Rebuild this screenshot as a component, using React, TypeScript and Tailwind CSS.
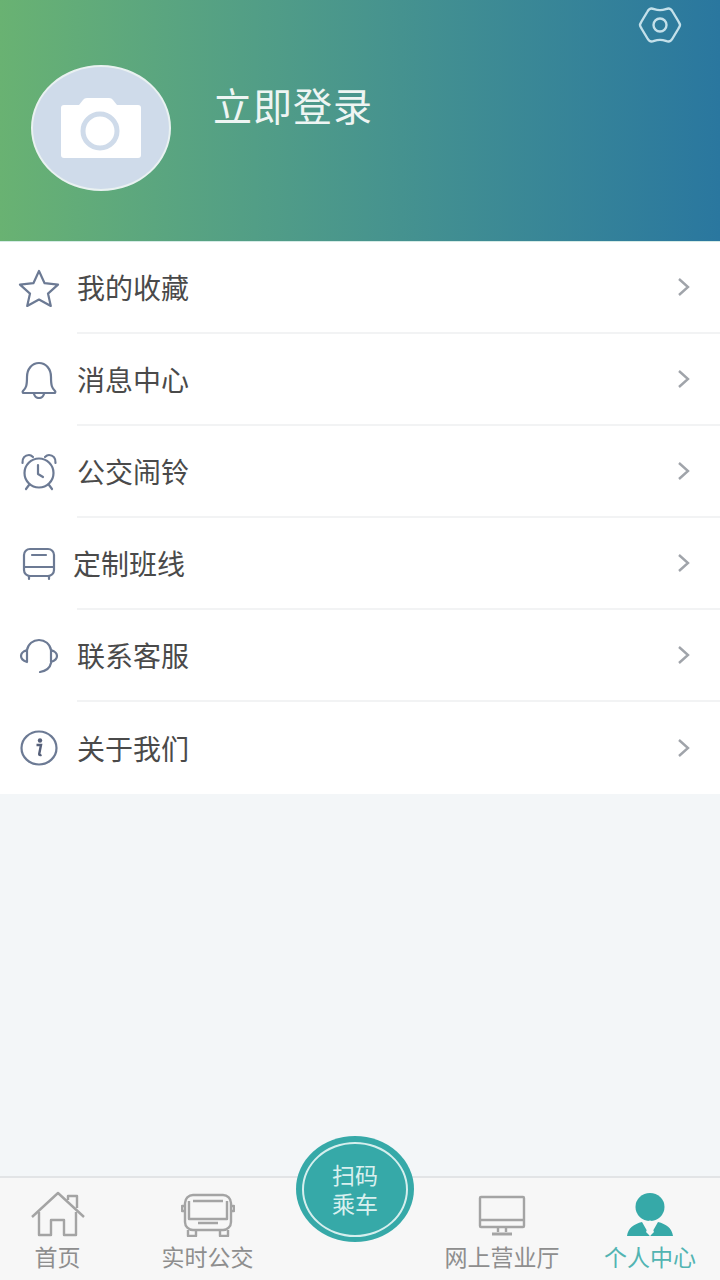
import React from "react";

const cjk = "font-['Noto_Sans_CJK_SC','Noto_Sans_CJK_JP',sans-serif]";

function Gear() {
  return (
    <svg width="44" height="40" viewBox="0 0 44 40" fill="none" stroke="#c4e0ea" strokeWidth="2.4" strokeLinejoin="round">
      <path d="M13.5 3.5c2.5 0 3.5 1.6 8.5 1.6s6-1.6 8.5-1.6c2 0 3 1.2 4 3l6 10c1 1.7 1.5 2.4 1.5 3.5s-.5 1.8-1.5 3.500l-6 10c-1 1.800-2 3-4 3-2.500 0-3.500-1.600-8.500-1.600s-6 1.600-8.500 1.600c-2 0-3-1.200-4-3l-6-10C2.500 21.800 2 21.100 2 20s.5-1.800 1.500-3.500l6-10c1-1.800 2-3 4-3z" />
      <ellipse cx="22" cy="20" rx="6.5" ry="6.500" />
    </svg>
  );
}

function Camera() {
  return (
    <svg width="80" height="60" viewBox="0 0 80 60">
      <path d="M3 7h15l4-5c1-1.300 2-2 4-2h22c2 0 3 .7 4 2l4 5h21c2 0 3 1 3 3v47c0 2-1 3-3 3H3c-2 0-3-1-3-3V10c0-2 1-3 3-3z" fill="#fff" />
      <ellipse cx="39" cy="33" rx="17" ry="17" fill="none" stroke="#cfdbea" strokeWidth="5" />
    </svg>
  );
}

const s = { fill: "none", stroke: "#6c7a94", strokeWidth: 2.2, strokeLinejoin: "round" as const, strokeLinecap: "round" as const };

function StarIcon() {
  return (
    <svg width="42" height="38" viewBox="0 0 42 38" {...s}>
      <path d="M21 2l5.600 12.200 13.400 1.400-10 9 2.800 12.400L21 30.500 9.200 37 12 24.600 2 15.600l13.400-1.400z" />
    </svg>
  );
}
function BellIcon() {
  return (
    <svg width="38" height="38" viewBox="0 0 38 38" {...s}>
      <path d="M3 30c3-3 4-5 4-14 0-8 5-14 12-14s12 6 12 14c0 9 1 11 4 14 .8 1 .2 2-1 2H4c-1.200 0-1.800-1-1-2z" />
      <path d="M14 33c1 3 3 4 5 4s4-1 5-4" />
    </svg>
  );
}
function ClockIcon() {
  return (
    <svg width="38" height="38" viewBox="0 0 38 38" {...s}>
      <circle cx="19" cy="20" r="14.500" />
      <path d="M18 12v9l5 3" />
      <path d="M2.500 10C2 5 5 2 9 2c2 0 3 1 4 2M35.500 10C36 5 33 2 29 2c-2 0-3 1-4 2" />
      <path d="M9 32l-3 4M29 32l3 4" />
    </svg>
  );
}
function BusIcon() {
  return (
    <svg width="36" height="34" viewBox="0 0 36 34" {...s}>
      <rect x="3" y="2" width="30" height="27" rx="6" />
      <path d="M3 20h30M11 8h14M8 29v3M28 29v3" />
    </svg>
  );
}
function HeadsetIcon() {
  return (
    <svg width="40" height="36" viewBox="0 0 40 36" {...s}>
      <path d="M8 12C9 6 14 2 20 2s11 4 12 10" />
      <path d="M8 12c-3 1-6 3-6 6s3 5 6 6zM32 12c3 1 6 3 6 6s-3 5-6 6z" />
      <path d="M32 25c-1 5-5 8-11 9" />
    </svg>
  );
}
function InfoIcon() {
  return (
    <svg width="38" height="36" viewBox="0 0 38 36" fill="none">
      <ellipse cx="19" cy="18" rx="17.500" ry="16.500" stroke="#6c7a94" strokeWidth="2.200" />
      <circle cx="20" cy="10.500" r="2.200" fill="#56607a" />
      <path d="M16.500 15h4.500l-1.800 9c-.2 1 .6 1.400 2.300.8" fill="none" stroke="#56607a" strokeWidth="2.400" />
    </svg>
  );
}

function Chevron() {
  return (
    <svg width="14" height="20" viewBox="0 0 14 20" fill="none" stroke="#a0a4aa" strokeWidth="2.400">
      <path d="M2 2l9 8-9 8" />
    </svg>
  );
}

function HomeIcon() {
  return (
    <svg width="56" height="46" viewBox="0 0 56 46" fill="none" stroke="#a4a4a4" strokeWidth="2.400" strokeLinejoin="round">
      <path d="M2 26L28 2l26 24" />
      <path d="M9 21v23h12V29h13v15h12V21" />
      <path d="M38 9V5h9v12" />
    </svg>
  );
}
function TabBusIcon() {
  return (
    <svg width="54" height="44" viewBox="0 0 54 44" fill="none" stroke="#a4a4a4" strokeWidth="2.400" strokeLinejoin="round">
      <rect x="4" y="2" width="46" height="35" rx="8" />
      <path d="M12 8h30M4 13H1v5h3M50 13h3v5h-3M8 8v18h38V8" />
      <path d="M17 30h20M7 37v6h8v-6M39 37v6h8v-6" />
    </svg>
  );
}
function MonitorIcon() {
  return (
    <svg width="48" height="42" viewBox="0 0 48 42" fill="none" stroke="#a4a4a4" strokeWidth="2.400">
      <rect x="2" y="2" width="44" height="30" rx="1" />
      <path d="M2 25h44M20 32v5M28 32v5" />
      <path d="M14 39h20" strokeWidth="3" />
    </svg>
  );
}
function PersonIcon() {
  return (
    <svg width="48" height="44" viewBox="0 0 48 44">
      <ellipse cx="24" cy="14" rx="14.500" ry="14" fill="#36a9a8" />
      <path d="M1 43c1-8 7-12 15-14l8 14 8-14c8 2 14 6 15 14z" fill="#36a9a8" />
      <path d="M24 27l-3 4 1.500 2-2.500 6 4 4 4-4-2.500-6 1.500-2z" fill="#f7f7f7" />
    </svg>
  );
}

const rows: { label: string; icon: React.ReactNode; textClass?: string; last?: boolean }[] = [
  { label: "我的收藏", icon: <StarIcon /> },
  { label: "消息中心", icon: <BellIcon /> },
  { label: "公交闹铃", icon: <ClockIcon /> },
  { label: "定制班线", icon: <BusIcon />, textClass: "-ml-1" },
  { label: "联系客服", icon: <HeadsetIcon /> },
  { label: "关于我们", icon: <InfoIcon />, last: true },
];

function Tab({ w, icon, label, active }: { w: string; icon: React.ReactNode; label: string; active?: boolean }) {
  return (
    <div className={`${w} flex flex-col items-center`}>
      <div className="h-[50px] flex items-end justify-center">{icon}</div>
      <div className={`mt-[2px] text-[23px] leading-[34px] whitespace-nowrap ${active ? "text-[#52b4b2]" : "text-[#8e8e8e]"}`}>{label}</div>
    </div>
  );
}

export default function App() {
  return (
    <div className={`relative w-[720px] h-[1280px] flex flex-col overflow-hidden bg-[#f3f6f8] ${cjk}`}>
      <header className="h-[242px] shrink-0 bg-gradient-to-r from-[#69b272] to-[#2a779f] flex flex-col border-b border-[#d5ebe6]">
        <div className="flex justify-end pt-[5px] pr-[38px]">
          <Gear />
        </div>
        <div className="flex items-start pl-[31px] mt-[20px]">
          <div className="w-[140px] h-[126px] rounded-[50%] bg-[#cfdbea] border-2 border-[#e9f1f1] flex items-center justify-center">
            <Camera />
          </div>
          <div className="ml-[42px] mt-[10px] text-[#eef5f3] text-[39px] leading-[58px] tracking-[1px]">立即登录</div>
        </div>
      </header>

      <main className="bg-white h-[552px] shrink-0 flex flex-col">
        {rows.map((r) => (
          <div key={r.label} className="h-[92px] flex">
            <div className="w-[77px] shrink-0 flex items-center justify-center pr-[-1px]">{r.icon}</div>
            <div className={`flex-1 flex items-center justify-between pr-[29px] ${r.last ? "" : "border-b-2 border-[#f2f3f4]"}`}>
              <span className={`text-[28px] leading-[40px] text-[#4a4a4a] ${r.textClass ?? ""}`}>{r.label}</span>
              <Chevron />
            </div>
          </div>
        ))}
      </main>

      <div className="flex-1" />

      <nav className="h-[104px] shrink-0 bg-[#f7f7f7] border-t-2 border-[#e2e4e6] flex pt-[9px]">
        <Tab w="w-[115px]" icon={<HomeIcon />} label="首页" />
        <Tab w="w-[185px]" icon={<TabBusIcon />} label="实时公交" />
        <div className="w-[115px]" />
        <Tab w="w-[174px]" icon={<MonitorIcon />} label="网上营业厅" />
        <Tab w="w-[122px]" icon={<PersonIcon />} label="个人中心" active />
      </nav>

      <div className="absolute left-[296px] top-[1136px] w-[118px] h-[106px] rounded-[50%] bg-[#36a9a8] flex items-center justify-center">
        <div className="w-[106px] h-[95px] rounded-[50%] border-2 border-[#d6efee] flex flex-col items-center justify-center text-[#d9f0ef] text-[23px] leading-[29px]">
          <span>扫码</span>
          <span>乘车</span>
        </div>
      </div>
    </div>
  );
}
